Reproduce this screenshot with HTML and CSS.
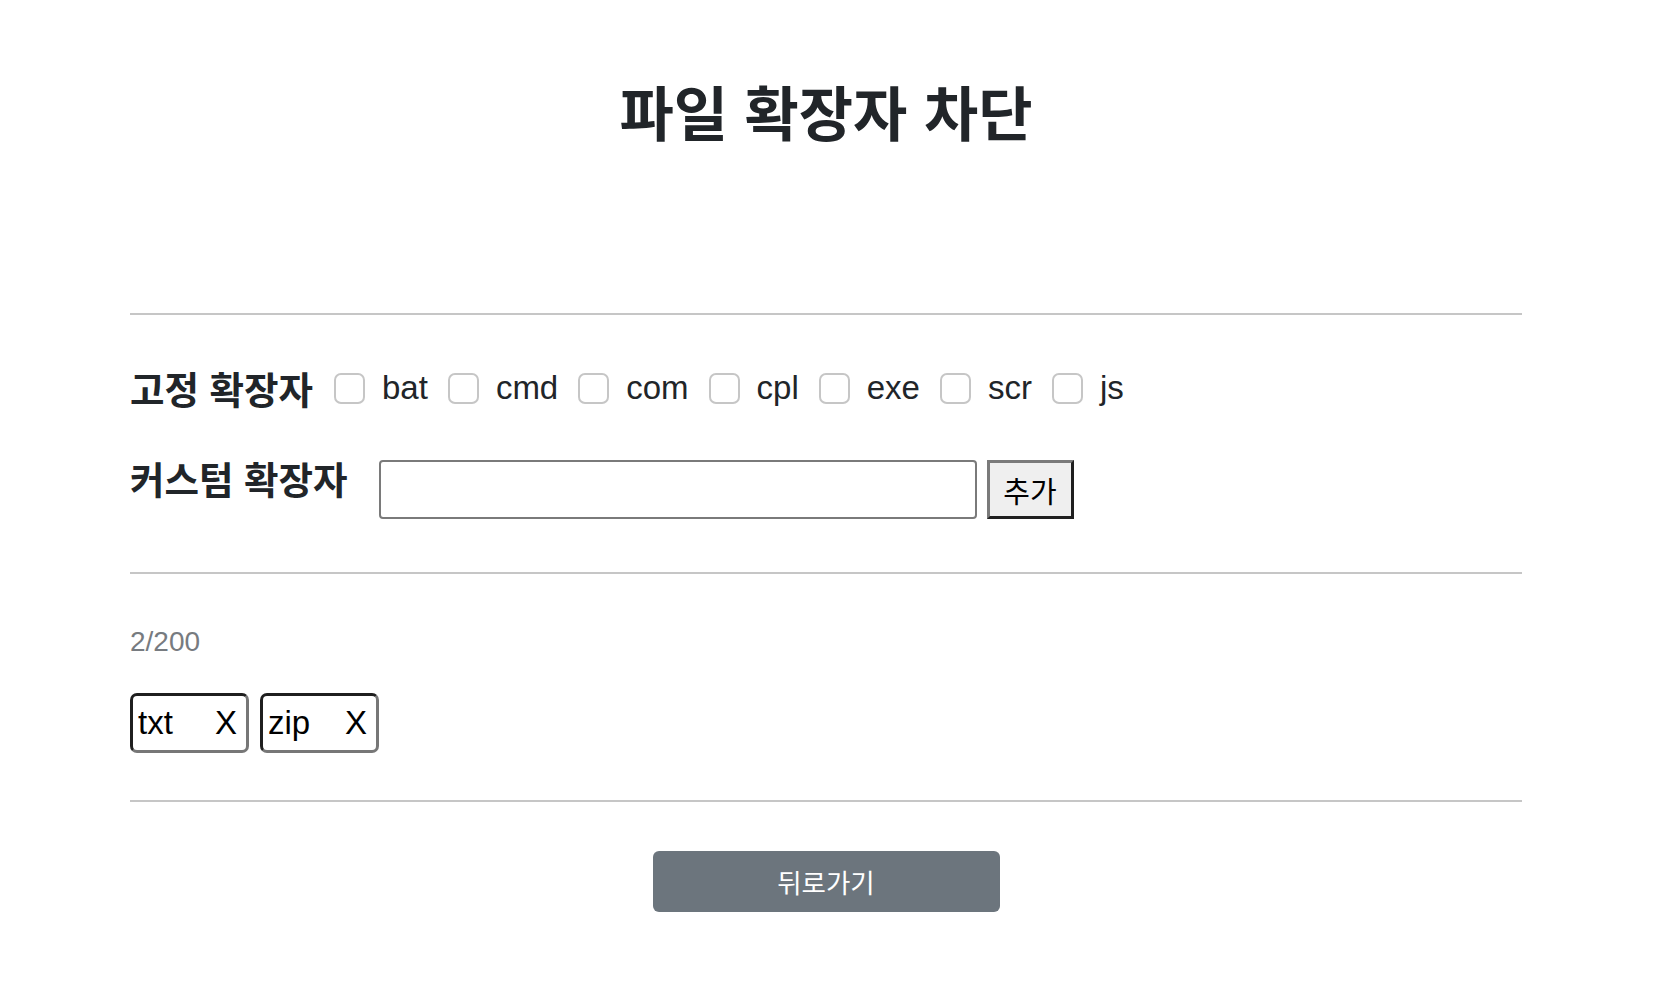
FILE: index.html
```html
<!DOCTYPE html>
<html lang="ko">
<head>
<meta charset="utf-8">
<title>파일 확장자 차단</title>
<link rel="stylesheet" href="styles.css">
</head>
<body>
<div class="page">
  <h1 class="title">파일 확장자 차단</h1>
  <div class="rule rule-top"></div>

  <div class="fixed-row">
    <span class="row-label">고정 확장자</span>
    <label class="opt"><input type="checkbox" class="check"><span>bat</span></label>
    <label class="opt"><input type="checkbox" class="check"><span>cmd</span></label>
    <label class="opt"><input type="checkbox" class="check"><span>com</span></label>
    <label class="opt"><input type="checkbox" class="check"><span>cpl</span></label>
    <label class="opt"><input type="checkbox" class="check"><span>exe</span></label>
    <label class="opt"><input type="checkbox" class="check"><span>scr</span></label>
    <label class="opt"><input type="checkbox" class="check"><span>js</span></label>
  </div>

  <div class="custom-row">
    <span class="row-label custom-label">커스텀 확장자</span>
    <input type="text" class="ext-input">
    <button class="add-btn">추가</button>
  </div>

  <div class="rule rule-mid"></div>

  <div class="count">2/200</div>
  <div class="tags">
    <div class="tag"><span>txt</span><span>X</span></div>
    <div class="tag"><span>zip</span><span>X</span></div>
  </div>

  <div class="rule rule-bottom"></div>

  <div class="back-wrap">
    <button class="back-btn">뒤로가기</button>
  </div>
</div>
</body>
</html>
```

FILE: styles.css
```css
html, body {
  margin: 0;
  padding: 0;
  background: #ffffff;
}

body {
  font-family: "Liberation Sans", "Noto Sans CJK KR", sans-serif;
  color: #212529;
}

.page {
  width: 1392px;
  margin-left: 130px;
  padding-top: 76px;
}

.title {
  margin: 0;
  height: 70px;
  line-height: 70px;
  font-family: "Noto Sans CJK KR", sans-serif;
  font-size: 59px;
  font-weight: 700;
  text-align: center;
  color: #212529;
}

.rule {
  height: 2px;
  background: #c6c6c6;
}

.rule-top {
  margin-top: 167px;
}

.fixed-row {
  margin-top: 43px;
  height: 60px;
  display: flex;
  align-items: center;
}

.row-label {
  font-family: "Noto Sans CJK KR", sans-serif;
  font-size: 37.5px;
  font-weight: 700;
  line-height: 42px;
  color: #212529;
}

.fixed-row .row-label {
  margin-right: 21px;
}

.opt {
  display: inline-flex;
  align-items: center;
  gap: 17px;
  margin-right: 20px;
  font-size: 33px;
  color: #212529;
}

.check {
  appearance: none;
  -webkit-appearance: none;
  margin: 0;
  width: 31px;
  height: 31px;
  border: 2px solid #c6c6c6;
  border-radius: 7px;
  background: #fff;
  box-sizing: border-box;
}

.custom-row {
  margin-top: 42px;
  display: flex;
  align-items: flex-start;
}

.custom-label {
  margin-top: -3px;
  margin-right: 31px;
}

.ext-input {
  box-sizing: border-box;
  width: 598px;
  height: 59px;
  margin: 0;
  border: 2px solid #7a7a7a;
  border-radius: 4px;
  background: #fff;
  font-size: 28px;
}

.add-btn {
  box-sizing: border-box;
  width: 87px;
  height: 59px;
  margin: 0 0 0 10px;
  padding: 0;
  border: 3px solid;
  border-color: #7a7a7a #1f1f1f #1f1f1f #7a7a7a;
  background: #efefef;
  font-family: "Noto Sans CJK KR", sans-serif;
  font-size: 29px;
  color: #000;
}

.rule-mid {
  margin-top: 53px;
}

.count {
  margin-top: 52px;
  font-size: 28px;
  line-height: 32px;
  color: #777b80;
}

.tags {
  margin-top: 35px;
  display: flex;
  gap: 11px;
}

.tag {
  box-sizing: border-box;
  width: 119px;
  height: 60px;
  display: flex;
  align-items: center;
  justify-content: space-between;
  padding: 0 9px 0 5px;
  border: 3px solid;
  border-color: #1f1f1f #777 #777 #1f1f1f;
  border-radius: 7px;
  font-size: 33px;
  color: #000;
}

.rule-bottom {
  margin-top: 47px;
}

.back-wrap {
  margin-top: 49px;
  display: flex;
  justify-content: center;
}

.back-btn {
  width: 347px;
  height: 61px;
  border: none;
  border-radius: 6px;
  background: #6c757d;
  color: #fff;
  font-family: "Noto Sans CJK KR", sans-serif;
  font-size: 26.5px;
}
```
